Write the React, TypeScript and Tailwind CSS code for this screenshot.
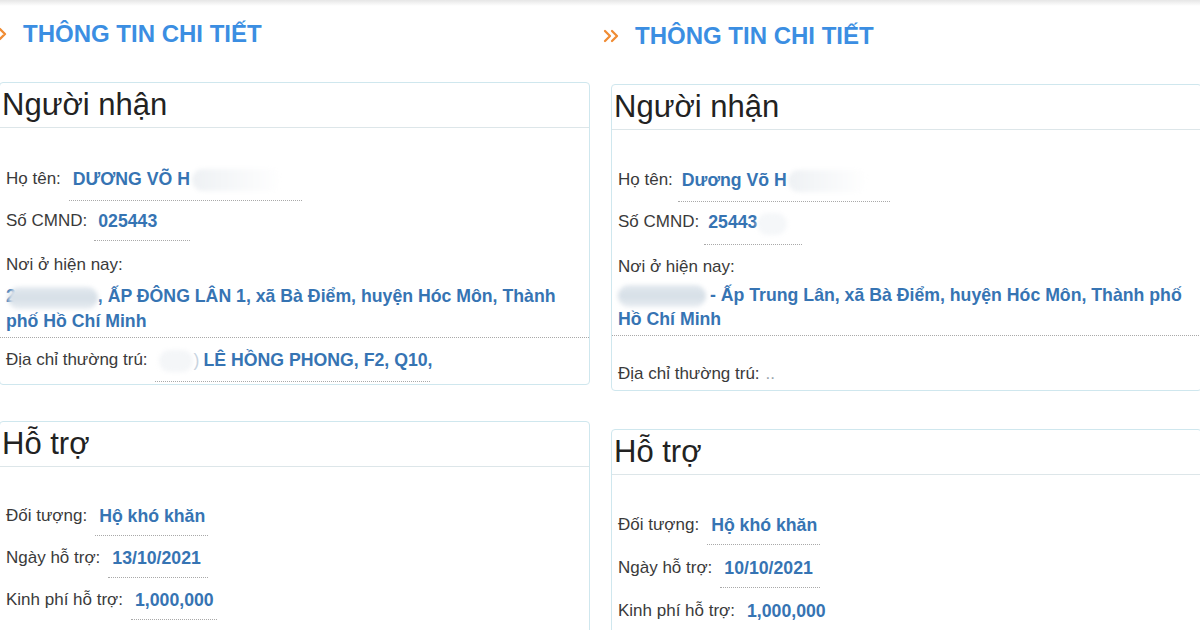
import React from "react";

function Chevron() {
  return (
    <svg width="16" height="14" viewBox="0 0 16 14" className="shrink-0">
      <path
        d="M2 2 L7 7 L2 12 M9 2 L14 7 L9 12"
        fill="none"
        stroke="#f08c34"
        strokeWidth="2.3"
        strokeLinecap="round"
        strokeLinejoin="round"
      />
    </svg>
  );
}

function Heading({ top }: { top: string }) {
  return (
    <div className={`flex items-center pl-[3px] gap-[16px] h-[28px] ${top}`}>
      <Chevron />
      <span className="text-[24px] leading-[28px] font-bold text-[#3b8ee2]">
        THÔNG TIN CHI TIẾT
      </span>
    </div>
  );
}

function Blob({ w, cls }: { w: string; cls: string }) {
  return (
    <span
      className={`inline-block ${w} h-[22px] rounded-full align-middle blur-[2px] ${cls}`}
    />
  );
}

function Field({
  label,
  children,
  w,
  mt,
  gap = "ml-[8px]",
}: {
  label: string;
  children?: React.ReactNode;
  w?: string;
  mt: string;
  gap?: string;
}) {
  return (
    <div className={`flex items-start ${mt}`}>
      <span className="text-[17px] leading-[20px] text-[#3a3a3a] whitespace-nowrap">
        {label}
      </span>
      <span
        className={`${gap} inline-block ${w ?? ""} border-b border-dotted border-[#a9a9a9] pb-[9px] px-[4px] text-[17.7px] leading-[20px] font-bold text-[#3674b3] whitespace-nowrap`}
      >
        {children}
      </span>
    </div>
  );
}

function Card({
  title,
  children,
  mt,
  pb,
}: {
  title: string;
  children: React.ReactNode;
  mt: string;
  pb: string;
}) {
  return (
    <div
      className={`ml-[11px] w-[591px] border border-[#cfe7ee] rounded-[4px] bg-white ${mt}`}
    >
      <div className="h-[45px] border-b border-[#dde6e9] px-[2px] flex items-center text-[31px] text-[#222]">
        {title}
      </div>
      <div className={`px-[6px] pt-[39px] ${pb}`}>{children}</div>
    </div>
  );
}

function TopStrip() {
  return <div className="h-[6px] bg-gradient-to-b from-[#e6e6e6] to-white" />;
}

function LeftColumn() {
  return (
    <div className="w-[600px] h-[630px] overflow-hidden bg-white">
      <TopStrip />
      <div className="ml-[-12px]">
        <Heading top="mt-[14px]" />
        <Card title="Người nhận" mt="mt-[34px]" pb="pb-[2px]">
          <Field label="Họ tên:" w="w-[233px]" mt="mt-[2px]">
            DƯƠNG VÕ H
            <Blob w="w-[90px]" cls="bg-gradient-to-r from-[#eef1f4] to-white ml-[2px]" />
          </Field>
          <Field label="Số CMND:" w="w-[96px]" mt="mt-[10px]" gap="ml-[7px]">
            025443
          </Field>
          <div className="mt-[14px] text-[17px] leading-[20px] text-[#3a3a3a]">
            Nơi ở hiện nay:
          </div>
          <div className="mx-[-6px] px-[6px] mt-[9px] pb-[4px] border-b border-dotted border-[#a9a9a9] text-[17.7px] leading-[24px] font-bold text-[#3674b3]">
            <span>2</span>
            <Blob
              w="w-[90px]"
              cls="bg-gradient-to-b from-[#e3e9ef] via-[#d6dfe7] to-[#e8edf2] ml-[-8px]"
            />
            , ẤP ĐÔNG LÂN 1, xã Bà Điểm, huyện Hóc Môn, Thành
            <br />
            phố Hồ Chí Minh
          </div>
          <Field label="Địa chỉ thường trú:" w="w-[275px]" mt="mt-[12px]" gap="ml-[7px]">
            <Blob w="w-[34px]" cls="bg-[#f4f6f8]" />
            <span className="text-[#c9d4df] font-normal ml-[1px]">)</span>
            <span className="ml-[4px]">LÊ HỒNG PHONG, F2, Q10,</span>
          </Field>
        </Card>
        <Card title="Hỗ trợ" mt="mt-[36px]" pb="pb-[20px]">
          <Field label="Đối tượng:" w="w-[113px]" mt="mt-0">
            Hộ khó khăn
          </Field>
          <Field label="Ngày hỗ trợ:" w="w-[100px]" mt="mt-[12px]">
            13/10/2021
          </Field>
          <Field label="Kinh phí hỗ trợ:" w="w-[86px]" mt="mt-[12px]">
            1,000,000
          </Field>
        </Card>
      </div>
    </div>
  );
}

function RightColumn() {
  return (
    <div className="w-[600px] h-[630px] overflow-hidden bg-white">
      <TopStrip />
      <div className="ml-0">
        <Heading top="mt-[16px]" />
        <Card title="Người nhận" mt="mt-[34px]" pb="pb-[6px]">
          <Field label="Họ tên:" w="w-[212px]" mt="mt-[1px]" gap="ml-[5px]">
            Dương Võ H
            <Blob w="w-[80px]" cls="bg-gradient-to-r from-[#eef1f4] to-white ml-[1px]" />
          </Field>
          <Field label="Số CMND:" w="w-[98px]" mt="mt-[10px]" gap="ml-[5px]">
            25443
            <Blob w="w-[30px]" cls="bg-[#f5f7f9]" />
          </Field>
          <div className="mt-[12px] text-[17px] leading-[20px] text-[#3a3a3a]">
            Nơi ở hiện nay:
          </div>
          <div className="mx-[-6px] px-[6px] mt-[6px] pb-[4px] border-b border-dotted border-[#a9a9a9] text-[17.7px] leading-[24px] font-bold text-[#3674b3]">
            <Blob
              w="w-[88px]"
              cls="bg-gradient-to-b from-[#e3e9ef] via-[#d6dfe7] to-[#e8edf2]"
            />
            <span className="ml-[4px]">
              - Ấp Trung Lân, xã Bà Điểm, huyện Hóc Môn, Thành phố
            </span>
            <br />
            Hồ Chí Minh
          </div>
          <div className="mt-[28px] flex items-start text-[17px] leading-[20px] text-[#3a3a3a]">
            Địa chỉ thường trú:
            <span className="ml-[6px] text-[#9aa4ad]">..</span>
          </div>
        </Card>
        <Card title="Hỗ trợ" mt="mt-[38px]" pb="pb-[20px]">
          <Field label="Đối tượng:" w="w-[113px]" mt="mt-[1px]">
            Hộ khó khăn
          </Field>
          <Field label="Ngày hỗ trợ:" w="w-[100px]" mt="mt-[13px]">
            10/10/2021
          </Field>
          <Field label="Kinh phí hỗ trợ:" w="w-[86px]" mt="mt-[13px]">
            1,000,000
          </Field>
        </Card>
      </div>
    </div>
  );
}

export default function App() {
  return (
    <div className="w-[1200px] h-[630px] overflow-hidden flex bg-white font-['Liberation_Sans',Arial,sans-serif]">
      <LeftColumn />
      <RightColumn />
    </div>
  );
}
